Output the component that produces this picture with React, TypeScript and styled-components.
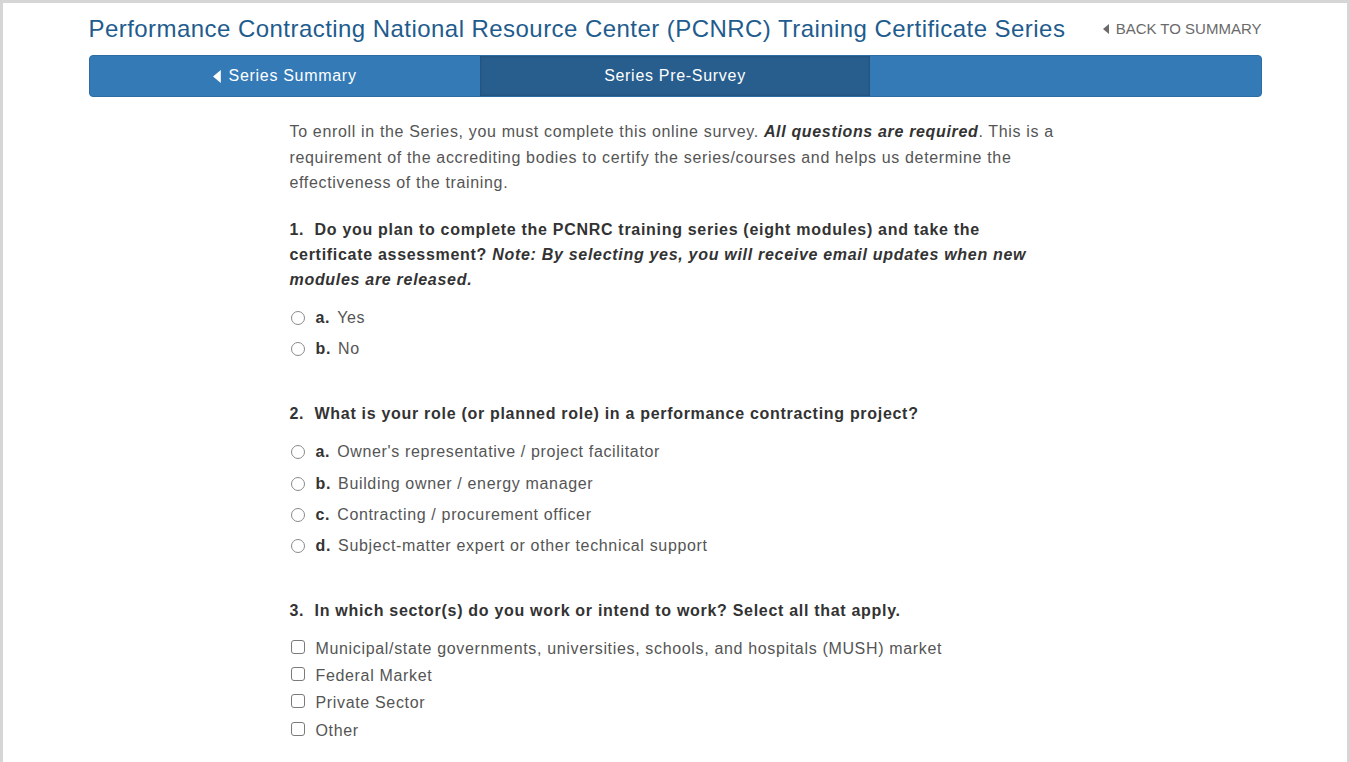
import styled, { createGlobalStyle } from "styled-components";

const GlobalStyle = createGlobalStyle`
  html, body {
    margin: 0;
    padding: 0;
    background: #ffffff;
  }
  body {
    font-family: "Liberation Sans", Arial, sans-serif;
    color: #555555;
  }
  * {
    box-sizing: border-box;
  }
`;

const Frame = styled.div`
  min-height: 100vh;
  border: 3px solid #d6d6d6;
  background: #ffffff;
`;

const Container = styled.div`
  width: 1173px;
  margin: 0 auto;
`;

const Header = styled.header`
  display: flex;
  align-items: center;
  justify-content: space-between;
  padding-top: 12px;
  height: 52px;
  padding-bottom: 12px;
`;

const Title = styled.h1`
  margin: 0;
  font-size: 24px;
  font-weight: normal;
  line-height: 28px;
  letter-spacing: 0.45px;
  color: #1f5c8e;
`;

const BackLink = styled.a`
  display: flex;
  align-items: center;
  gap: 7px;
  font-size: 15px;
  color: #6a6a6a;
  text-transform: uppercase;
  text-decoration: none;
  margin-top: -1px;
`;

const TabBar = styled.nav`
  display: grid;
  grid-template-columns: repeat(3, 1fr);
  height: 42px;
  background: #337ab7;
  border: 1px solid #2e6da4;
  border-radius: 4px;
  overflow: hidden;
`;

const Tab = styled.div<{ $active?: boolean }>`
  display: flex;
  align-items: center;
  justify-content: center;
  gap: 8px;
  color: #ffffff;
  font-size: 16px;
  letter-spacing: 0.7px;
  background: ${(p) => (p.$active ? "#285e8e" : "transparent")};
  box-shadow: ${(p) => (p.$active ? "inset 0 0 3px rgba(0,0,0,0.25)" : "none")};
`;

const Content = styled.main`
  width: 775px;
  margin-left: 201px;
  padding-top: 22px;
  letter-spacing: 0.66px;
`;

const Intro = styled.p`
  margin: 0 0 21px;
  font-size: 16px;
  line-height: 25.6px;
  color: #555555;
  b {
    color: #333333;
  }
`;

const Question = styled.section`
  margin-bottom: 36px;
`;

const Prompt = styled.p`
  margin: 0 0 11px;
  font-size: 16px;
  font-weight: bold;
  line-height: 25px;
  letter-spacing: 0.7px;
  color: #333333;
`;

const Options = styled.div<{ $gap?: number }>`
  display: flex;
  flex-direction: column;
  margin-top: ${(p) => p.$gap ?? 0}px;
`;

const Option = styled.label<{ $h: number }>`
  display: flex;
  align-items: center;
  height: ${(p) => p.$h}px;
  font-size: 16px;
  color: #555555;
`;

const Radio = styled.input`
  appearance: none;
  width: 14px;
  height: 14px;
  margin: 0 11px 0 1px;
  border: 1px solid #8a8a8a;
  border-radius: 50%;
  background: #ffffff;
  flex: none;
`;

const Checkbox = styled.input`
  appearance: none;
  width: 14px;
  height: 14px;
  margin: -4px 11px 0 1px;
  border: 1px solid #7a7a7a;
  border-radius: 3px;
  background: #ffffff;
  flex: none;
`;

const Letter = styled.b`
  color: #333333;
  margin-right: 7px;
`;

const Caret = ({ size = 10 }: { size?: number }) => (
  <svg width={size * 0.6} height={size} viewBox="0 0 6 10">
    <polygon points="6,0 6,10 0,5" fill="currentColor" />
  </svg>
);

const roles = [
  "Owner's representative / project facilitator",
  "Building owner / energy manager",
  "Contracting / procurement officer",
  "Subject-matter expert or other technical support",
];

const sectors = [
  "Municipal/state governments, universities, schools, and hospitals (MUSH) market",
  "Federal Market",
  "Private Sector",
  "Other",
];

export default function App() {
  return (
    <Frame>
      <GlobalStyle />
      <Container>
        <Header>
          <Title>
            Performance Contracting National Resource Center (PCNRC) Training
            Certificate Series
          </Title>
          <BackLink href="#">
            <Caret size={10} />
            Back to Summary
          </BackLink>
        </Header>
        <TabBar>
          <Tab>
            <Caret size={13} />
            Series Summary
          </Tab>
          <Tab $active>Series Pre-Survey</Tab>
          <Tab />
        </TabBar>
        <Content>
          <Intro>
            To enroll in the Series, you must complete this online survey.{" "}
            <b>
              <i>All questions are required</i>
            </b>
            . This is a requirement of the accrediting bodies to certify the
            series/courses and helps us determine the effectiveness of the
            training.
          </Intro>

          <Question>
            <Prompt>
              1.&nbsp; Do you plan to complete the PCNRC training series (eight
              modules) and take the certificate assessment?{" "}
              <i>
                Note: By selecting yes, you will receive email updates when new
                modules are released.
              </i>
            </Prompt>
            <Options>
              <Option $h={31}>
                <Radio type="radio" name="q1" />
                <Letter>a.</Letter>Yes
              </Option>
              <Option $h={31}>
                <Radio type="radio" name="q1" />
                <Letter>b.</Letter>No
              </Option>
            </Options>
          </Question>

          <Question>
            <Prompt>
              2.&nbsp; What is your role (or planned role) in a performance
              contracting project?
            </Prompt>
            <Options>
              {roles.map((r, i) => (
                <Option key={r} $h={31.3}>
                  <Radio type="radio" name="q2" />
                  <Letter>{"abcd"[i]}.</Letter>
                  {r}
                </Option>
              ))}
            </Options>
          </Question>

          <Question>
            <Prompt>
              3.&nbsp; In which sector(s) do you work or intend to work? Select
              all that apply.
            </Prompt>
            <Options $gap={12}>
              {sectors.map((s) => (
                <Option key={s} $h={27.3}>
                  <Checkbox type="checkbox" />
                  {s}
                </Option>
              ))}
            </Options>
          </Question>
        </Content>
      </Container>
    </Frame>
  );
}
